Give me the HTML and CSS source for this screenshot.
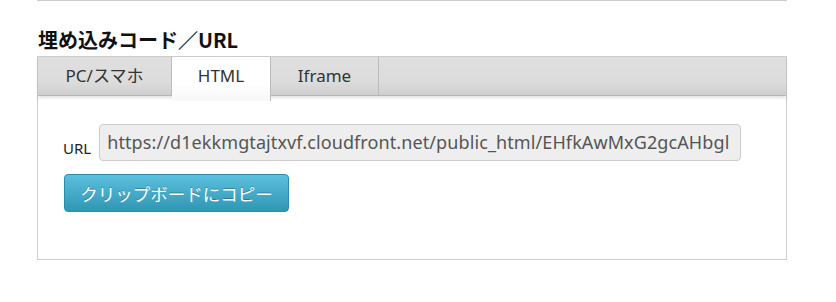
FILE: index.html
```html
<!DOCTYPE html>
<html lang="ja">
<head>
<meta charset="utf-8">
<link rel="stylesheet" href="styles.css">
</head>
<body>
<div class="wrap">
  <div class="rule"></div>
  <h2 class="title">埋め込みコード／URL</h2>
  <div class="panel">
    <div class="tabs">
      <div class="tab tab-pc">PC/スマホ</div>
      <div class="tab tab-html active">HTML</div>
      <div class="tab tab-iframe">Iframe</div>
    </div>
    <div class="body">
      <div class="row">
        <label class="label">URL</label>
        <div class="input">https://d1ekkmgtajtxvf.cloudfront.net/public_html/EHfkAwMxG2gcAHbgl</div>
      </div>
      <button class="btn">クリップボードにコピー</button>
    </div>
  </div>
</div>
</body>
</html>
```
FILE: styles.css
```css
html, body {
  margin: 0;
  padding: 0;
  background: #fff;
}
body {
  font-family: "Noto Sans", "Noto Sans CJK JP", sans-serif;
  color: #333;
}
.wrap {
  margin-left: 37px;
  width: 750px;
}
.rule {
  height: 1px;
  background: #ccc;
}
.title {
  margin: 25px 0 0 1px;
  height: 30px;
  font-size: 20px;
  font-weight: bold;
  line-height: 28px;
  color: #111;
  font-family: "Noto Sans CJK JP", sans-serif;
}
.panel {
  border: 1px solid #ccc;
  height: 202px;
  box-sizing: content-box;
}
.tabs {
  display: flex;
  height: 38px;
  background: linear-gradient(#dfdfdf 0%, #dcdcdc 65%, #cfcfcf 100%);
  border-bottom: 1px solid #b5b5b5;
  box-shadow: 0 2px 3px rgba(0,0,0,0.12);
  position: relative;
}
.tab {
  box-sizing: border-box;
  height: 38px;
  line-height: 38px;
  text-align: center;
  font-size: 17px;
  color: #333;
  border-right: 1px solid #bbb;
}
.tab-pc { width: 134px; }
.tab-html { width: 99px; }
.tab-iframe { width: 108px; }
.tab.active {
  background: linear-gradient(#fff 0%, #fff 60%, #f7f7f7 100%);
  height: 44px;
  margin-bottom: -6px;
  position: relative;
  z-index: 2;
  border-right: 1px solid #bbb;
}
.body {
  padding: 28px 0 0 25px;
}
.row {
  display: flex;
  align-items: flex-end;
}
.label {
  font-size: 15px;
  color: #222;
  margin-right: 8px;
  line-height: 18px;
  padding-bottom: 4px;
}
.input {
  box-sizing: border-box;
  width: 642px;
  height: 37px;
  line-height: 35px;
  border: 1px solid #ccc;
  border-radius: 4px;
  background: #eee;
  color: #555;
  font-size: 18px;
  letter-spacing: 0.1px;
  padding-left: 7px;
  white-space: nowrap;
  overflow: hidden;
}
.btn {
  display: block;
  margin-top: 13px;
  margin-left: 1px;
  width: 225px;
  height: 38px;
  border: 1px solid #2a8bab;
  border-radius: 4px;
  background: linear-gradient(#5bc0de, #2f96b4);
  color: #fff;
  font-family: "Noto Sans CJK JP", sans-serif;
  font-size: 17.5px;
  text-shadow: 0 -1px 0 rgba(0,0,0,0.25);
  padding: 0;
}
```
